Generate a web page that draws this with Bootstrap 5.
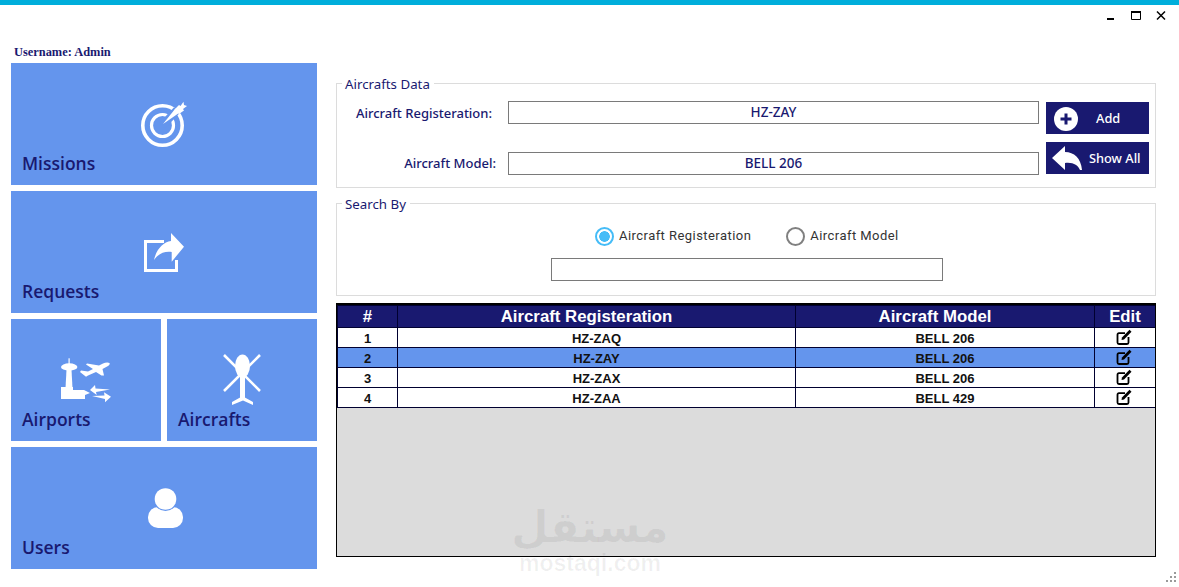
<!DOCTYPE html>
<html lang="en">
<head>
  <meta charset="UTF-8">
  <meta name="viewport" content="width=device-width, initial-scale=1.0">
  <title>Aircrafts Data</title>
  <link href="https://cdn.jsdelivr.net/npm/bootstrap@5.3.0/dist/css/bootstrap.min.css" rel="stylesheet">
  <style>
    html, body {
      height: 587px;
      overflow: hidden;
      background: #fff;
    }
    .top-strip {
      height: 5px;
      background: #00aedb;
    }
    .win-bar {
      height: 40px;
      padding: 5px 13px 0 0;
      gap: 15px;
    }
    .side-col {
      width: 306px;
      margin-left: 11px;
    }
    .user-line {
      height: 18px;
      padding: 0 0 0 3px;
      font: bold 12.4px/14px "Liberation Serif", serif;
      color: #191970;
    }
    .tile {
      height: 122px;
      background: #6495ed;
      padding: 33px 0 0;
      margin-bottom: 6px;
      position: relative;
    }
    .tile svg {
      display: block;
      margin: 0 auto;
    }
    .tile-half {
      width: 150px;
      margin-bottom: 0;
    }
    .tile-last {
      margin-top: 6px;
    }
    .tile-name {
      position: absolute;
      left: 11px;
      bottom: 10px;
      font: 600 17.5px/24px "Open Sans", sans-serif;
      color: #191970;
    }
    .main-col {
      width: 820px;
      margin-left: 19px;
      padding-top: 29px;
      position: relative;
    }
    .group-box {
      border: 1px solid #dcdcdc;
      padding: 0 5px;
      margin: 0;
      min-width: 0;
    }
    .group-box legend {
      float: none;
      width: auto;
      font: 13.3px/16px "Noto Sans", sans-serif;
      color: #191970;
      padding: 2px 4px 0 3px;
      margin: 0;
    }
    .data-box {
      height: 114px;
      padding-top: 9px;
      padding-right: 6px;
    }
    .search-box {
      height: 102px;
      margin-top: 6px;
    }
    .field-line {
      height: 23px;
      margin-bottom: 28px;
    }
    .field-name {
      font: 500 13px/23px "Noto Sans", sans-serif;
      color: #191970;
      text-align: right;
      width: 166px;
    }
    .name-a { padding: 1px 16px 0 0; }
    .name-b { padding-right: 12px; }
    .data-input {
      width: 531px;
      height: 23px;
      border: 1px solid #7a7a7a;
      border-radius: 0;
      padding: 0 0 2px;
      font: 500 13.5px/19px "Noto Sans", sans-serif;
      color: #191970;
      text-align: center;
      background: #fff;
    }
    .side-btns {
      margin-left: 7px;
      padding-top: 1px;
      gap: 8px;
    }
    .dark-btn {
      width: 103px;
      height: 32px;
      padding: 0;
      border: 0;
      border-radius: 0;
      background: #191970;
      color: #fff;
      font: 500 12.8px/32px "Noto Sans", sans-serif;
      position: relative;
      text-align: left;
    }
    .dark-btn svg {
      position: absolute;
      left: 5px;
      top: 3px;
    }
    .btn-add { padding-left: 50px; }
    .btn-add svg { left: 7px; top: 4px; }
    .btn-all { padding-left: 43px; }
    .radio-line {
      margin-top: 14px;
      padding-left: 253px;
      height: 20px;
      gap: 35px;
    }
    .radio-opt {
      gap: 5px;
      font: 13px/20px Roboto, sans-serif;
      letter-spacing: .45px;
      color: #333;
    }
    .rb {
      appearance: none;
      width: 19px;
      height: 19px;
      margin: 0;
      border-radius: 50%;
      border: 2px solid #808080;
      background: #fff;
    }
    .rb:checked {
      border-color: #45bcf7;
      background: radial-gradient(circle, #45bcf7 0 5px, #fff 5.6px);
    }
    .find-input {
      display: block;
      width: 392px;
      height: 23px;
      margin: 12px 0 0 209px;
      border: 1px solid #7a7a7a;
      border-radius: 0;
      background: #fff;
    }
    .grid-panel {
      height: 254px;
      margin-top: 7px;
      background: #dcdcdc;
      border: 1px solid #000;
      border-top-width: 2px;
      overflow: hidden;
    }
    .acft-table {
      table-layout: fixed;
      font-family: "Liberation Sans", sans-serif;
      width: 818px;
      --bs-table-border-color: #000030;
    }
    .acft-table th {
      height: 22px;
      padding: 0;
      background: #191970;
      color: #fff;
      font: bold 16.8px/21px "Liberation Sans", sans-serif;
      text-align: center;
      border-color: #000030;
    }
    .acft-table td {
      height: 20px;
      padding: 2px 0 0;
      font: bold 13px/17px "Liberation Sans", sans-serif;
      color: #111;
      text-align: center;
      background: #fff;
    }
    .acft-table tr.picked td { background: #6495ed; }
    .acft-table td.edit-cell { padding-top: 1px; line-height: 18px; }
    .acft-table td svg { display: block; margin: 0 auto; }
    .w-num { width: 60px; }
    .acft-table th.w-reg { width: 398px; padding-right: 20px; }
    .acft-table th.w-mod { width: 299px; padding-right: 20px; }
    .w-edit { width: 61px; }
    .water-mark {
      position: absolute;
      left: 149px;
      top: 460px;
      width: 210px;
      text-align: center;
      color: rgba(0, 0, 0, .06);
      pointer-events: none;
    }
    .water-ar {
      font: bold 43px/44px "DejaVu Sans", sans-serif;
    }
    .water-en {
      font: bold 23px/22px "Liberation Sans", sans-serif;
      margin-top: 3px;
    }
    .grip {
      position: absolute;
      right: 2px;
      bottom: 4px;
    }
  </style>
</head>
<body class="position-relative">

  <div class="top-strip"></div>

  <!-- window buttons -->
  <div class="win-bar d-flex justify-content-end align-items-start">
    <svg width="10" height="12" viewBox="0 0 10 12"><rect x="1" y="8" width="7" height="2" fill="#000"/></svg>
    <svg width="10" height="12" viewBox="0 0 10 12"><path d="M.5 1.5h9v8h-9z M.5 2h9" fill="none" stroke="#000" stroke-width="1"/><rect y="1" width="10" height="2" fill="#000"/></svg>
    <svg width="10" height="12" viewBox="0 0 10 12"><path d="M1 1.5l8 8M9 1.5l-8 8" fill="none" stroke="#000" stroke-width="1.5"/></svg>
  </div>

  <div class="d-flex">
    <!-- left menu -->
    <div class="side-col">
      <div class="user-line">Username: Admin</div>

      <div class="tile">
        <svg width="56" height="56" viewBox="0 0 56 56">
          <circle cx="26.5" cy="29.5" r="19.7" fill="none" stroke="#fff" stroke-width="3.6"/>
          <circle cx="26.5" cy="29.5" r="11" fill="none" stroke="#fff" stroke-width="3.2"/>
          <path d="M26 30L41 14" stroke="#6495ed" stroke-width="8"/>
          <path d="M27 28L39 13L43 17Z" fill="#fff"/>
          <path d="M38.5 13.5L43 9L44.5 10L47.5 5.7L48 9L51 10L47 13L48 14.5L43 18Z" fill="#fff"/>
        </svg>
        <div class="tile-name">Missions</div>
      </div>

      <div class="tile">
        <svg width="56" height="56" viewBox="0 0 56 56">
          <path d="M28 17.5H9.5V46.5H40.5V36" fill="none" stroke="#fff" stroke-width="3"/>
          <path d="M18 36C20 26 27 18 35 17V9L48 22.7L35.7 37.7V28C28 27 22 30 18 36Z" fill="#fff"/>
        </svg>
        <div class="tile-name">Requests</div>
      </div>

      <div class="d-flex justify-content-between">
        <div class="tile tile-half">
          <svg width="56" height="56" viewBox="0 0 56 56" fill="#fff">
            <rect x="10.5" y="6.3" width="1.2" height="6"/>
            <ellipse cx="11.2" cy="15" rx="8.2" ry="3.7"/>
            <path d="M8.5 18H13.5L14.5 36H7.5Z"/>
            <path d="M3 35H15V38H26L32 41L27 43V47H3Z"/>
            <path d="M51.5 11C50 10 47 10.5 45 11.5L41 13.5L29 11.5L28 12.5L35 17L30 19.5L23 18.5L22 20L28 24.7L30 23.5L38 20L43.5 23.5L46 23.5L44.5 17L50 14C51.5 13 52 12 51.5 11Z"/>
            <path d="M32 38L37 33L37.5 36.5L52 37.5L38 40L38.7 43Z"/>
            <path d="M53 44.7L46 40.3L46.5 43.5L34 44L47 47L47 50.3Z"/>
          </svg>
          <div class="tile-name">Airports</div>
        </div>
        <div class="tile tile-half">
          <svg width="56" height="56" viewBox="0 0 56 56" fill="#fff">
            <path d="M10 3L46 39M46 3L10 39" stroke="#fff" stroke-width="2.6" fill="none"/>
            <ellipse cx="28.5" cy="14" rx="7.5" ry="11.5"/>
            <rect x="26" y="24" width="5" height="22"/>
            <path d="M18 50L27 45H30L39 50V53L29 48.5L18 53Z"/>
          </svg>
          <div class="tile-name">Aircrafts</div>
        </div>
      </div>

      <div class="tile tile-last">
        <svg width="56" height="56" viewBox="0 0 56 56" fill="#fff">
          <rect x="12" y="27" width="35" height="21" rx="10"/>
          <circle cx="29.5" cy="19" r="12" fill="#6495ed"/>
          <circle cx="29.5" cy="19" r="10.8"/>
        </svg>
        <div class="tile-name">Users</div>
      </div>
    </div>

    <!-- right side -->
    <div class="main-col">
      <fieldset class="group-box data-box">
        <legend>Aircrafts Data</legend>
        <div class="d-flex">
          <div>
            <div class="field-line d-flex">
              <div class="field-name name-a">Aircraft Registeration:</div>
              <input class="data-input" type="text" value="HZ-ZAY">
            </div>
            <div class="field-line d-flex">
              <div class="field-name name-b">Aircraft Model:</div>
              <input class="data-input" type="text" value="BELL 206">
            </div>
          </div>
          <div class="side-btns d-flex flex-column">
            <button class="btn dark-btn btn-add" type="button">
              <svg width="26" height="26" viewBox="0 0 26 26">
                <circle cx="13" cy="13" r="12" fill="#fff"/>
                <path d="M13 7.5v11M7.5 13h11" stroke="#191970" stroke-width="3"/>
              </svg>Add</button>
            <button class="btn dark-btn btn-all" type="button">
              <svg width="32" height="26" viewBox="0 0 32 26">
                <path d="M1 13L14 1V7C23 7 30 13 31 25H29C27 20 22 17 14 18V25Z" fill="#fff"/>
              </svg>Show All</button>
          </div>
        </div>
      </fieldset>

      <fieldset class="group-box search-box">
        <legend>Search By</legend>
        <div class="radio-line d-flex">
          <label class="radio-opt d-flex align-items-center"><input class="rb" type="radio" name="findBy" checked>Aircraft Registeration</label>
          <label class="radio-opt d-flex align-items-center"><input class="rb" type="radio" name="findBy">Aircraft Model</label>
        </div>
        <input class="find-input" type="text">
      </fieldset>

      <div class="grid-panel">
        <table class="table table-bordered mb-0 acft-table">
          <thead>
            <tr>
              <th class="w-num">#</th>
              <th class="w-reg">Aircraft Registeration</th>
              <th class="w-mod">Aircraft Model</th>
              <th class="w-edit">Edit</th>
            </tr>
          </thead>
          <tbody>
            <tr>
              <td>1</td><td>HZ-ZAQ</td><td>BELL 206</td>
              <td class="edit-cell"><svg width="18" height="18" viewBox="0 0 18 18"><path d="M9 4.2H3Q1.5 4.2 1.5 5.7V13.5Q1.5 15 3 15H11Q12.5 15 12.5 13.5V8" fill="none" stroke="#000" stroke-width="1.8"/><path d="M5.5 11L6 8.5L13.5 .8L15.5 2.8L8 10.5Z" fill="#000"/></svg></td>
            </tr>
            <tr class="picked">
              <td>2</td><td>HZ-ZAY</td><td>BELL 206</td>
              <td class="edit-cell"><svg width="18" height="18" viewBox="0 0 18 18"><path d="M9 4.2H3Q1.5 4.2 1.5 5.7V13.5Q1.5 15 3 15H11Q12.5 15 12.5 13.5V8" fill="none" stroke="#000" stroke-width="1.8"/><path d="M5.5 11L6 8.5L13.5 .8L15.5 2.8L8 10.5Z" fill="#000"/></svg></td>
            </tr>
            <tr>
              <td>3</td><td>HZ-ZAX</td><td>BELL 206</td>
              <td class="edit-cell"><svg width="18" height="18" viewBox="0 0 18 18"><path d="M9 4.2H3Q1.5 4.2 1.5 5.7V13.5Q1.5 15 3 15H11Q12.5 15 12.5 13.5V8" fill="none" stroke="#000" stroke-width="1.8"/><path d="M5.5 11L6 8.5L13.5 .8L15.5 2.8L8 10.5Z" fill="#000"/></svg></td>
            </tr>
            <tr>
              <td>4</td><td>HZ-ZAA</td><td>BELL 429</td>
              <td class="edit-cell"><svg width="18" height="18" viewBox="0 0 18 18"><path d="M9 4.2H3Q1.5 4.2 1.5 5.7V13.5Q1.5 15 3 15H11Q12.5 15 12.5 13.5V8" fill="none" stroke="#000" stroke-width="1.8"/><path d="M5.5 11L6 8.5L13.5 .8L15.5 2.8L8 10.5Z" fill="#000"/></svg></td>
            </tr>
          </tbody>
        </table>
      </div>

      <div class="water-mark">
        <div class="water-ar" lang="ar" dir="rtl">مستقل</div>
        <div class="water-en">mostaqi.com</div>
      </div>
    </div>
  </div>

  <svg class="grip" width="12" height="11" viewBox="0 0 12 11" fill="#9a9a9a">
    <rect x="9" y="0" width="2" height="2"/>
    <rect x="5" y="4" width="2" height="2"/><rect x="9" y="4" width="2" height="2"/>
    <rect x="1" y="8" width="2" height="2"/><rect x="5" y="8" width="2" height="2"/><rect x="9" y="8" width="2" height="2"/>
  </svg>

  <script src="https://cdn.jsdelivr.net/npm/bootstrap@5.3.0/dist/js/bootstrap.bundle.min.js"></script>
</body>
</html>
